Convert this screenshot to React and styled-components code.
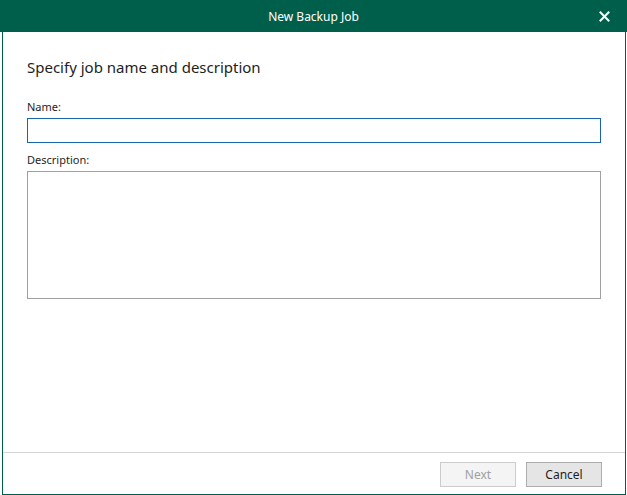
import styled, { createGlobalStyle } from "styled-components";

const GlobalStyle = createGlobalStyle`
  html, body {
    margin: 0;
    padding: 0;
    background: #ffffff;
  }
  body {
    font-family: "Noto Sans", "Open Sans", sans-serif;
  }
`;

const Window = styled.div`
  width: 627px;
  height: 495px;
  display: flex;
  flex-direction: column;
  box-sizing: border-box;
`;

const TitleBar = styled.div`
  height: 32px;
  flex: none;
  background: #005f4b;
  color: #ffffff;
  display: flex;
  align-items: center;
  justify-content: center;
  position: relative;
  font-size: 12px;
`;

const CloseButton = styled.button`
  position: absolute;
  right: 15px;
  top: 8px;
  width: 16px;
  height: 16px;
  padding: 0;
  border: none;
  background: transparent;
  display: flex;
  align-items: center;
  justify-content: center;
  cursor: pointer;
`;

const Frame = styled.div`
  flex: 1;
  margin: 0 1px 0 2px;
  border: 1px solid #005f4b;
  border-top: none;
  display: flex;
  flex-direction: column;
  min-height: 0;
`;

const Content = styled.div`
  flex: 1;
  padding: 24px 24px 0 24px;
  display: flex;
  flex-direction: column;
`;

const Heading = styled.h1`
  margin: 0 0 21px 0;
  font-size: 15px;
  font-weight: 400;
  color: #1e1e1e;
  line-height: 22px;
`;

const Label = styled.label`
  font-size: 11px;
  color: #1e1e1e;
  line-height: 16px;
  margin-bottom: 3px;
`;

const TextInput = styled.input`
  box-sizing: border-box;
  width: 574px;
  height: 25px;
  border: 1px solid ${(p) => (p.$focused ? "#1b64a8" : "#a0a0a0")};
  outline: none;
  margin: 0 0 9px 0;
  padding: 2px 4px;
  font: inherit;
  font-size: 12px;
`;

const TextArea = styled.textarea`
  box-sizing: border-box;
  width: 574px;
  height: 128px;
  border: 1px solid #a0a0a0;
  outline: none;
  resize: none;
  margin: 0;
  padding: 2px 4px;
  font: inherit;
  font-size: 12px;
`;

const Footer = styled.div`
  height: 40px;
  flex: none;
  border-top: 1px solid #d5d5d5;
  display: flex;
  align-items: center;
  justify-content: flex-end;
  gap: 10px;
  padding: 1px 23px 0 0;
`;

const Button = styled.button`
  box-sizing: border-box;
  width: 76px;
  height: 25px;
  font: inherit;
  font-size: 12px;
  border: 1px solid ${(p) => (p.disabled ? "#cccccc" : "#adadad")};
  background: ${(p) => (p.disabled ? "#f4f4f4" : "#e5e5e5")};
  color: ${(p) => (p.disabled ? "#a0a0a0" : "#1e1e1e")};
  padding: 0;
  cursor: ${(p) => (p.disabled ? "default" : "pointer")};
`;

export default function App() {
  return (
    <>
      <GlobalStyle />
      <Window>
        <TitleBar>
          New Backup Job
          <CloseButton aria-label="Close">
            <svg width="11" height="11" viewBox="0 0 11 11">
              <path
                d="M1.5 1.5 L9.5 9.5 M9.5 1.5 L1.5 9.5"
                stroke="#ffffff"
                strokeWidth="2"
                strokeLinecap="square"
              />
            </svg>
          </CloseButton>
        </TitleBar>
        <Frame>
          <Content>
            <Heading>Specify job name and description</Heading>
            <Label>Name:</Label>
            <TextInput $focused />
            <Label>Description:</Label>
            <TextArea />
          </Content>
          <Footer>
            <Button disabled>Next</Button>
            <Button>Cancel</Button>
          </Footer>
        </Frame>
      </Window>
    </>
  );
}
